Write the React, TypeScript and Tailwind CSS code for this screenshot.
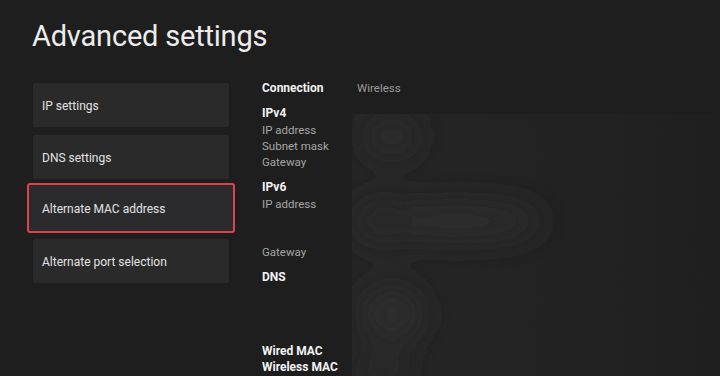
import React from "react";

const menu = [
  "IP settings",
  "DNS settings",
  "Alternate MAC address",
  "Alternate port selection",
];

type Row = { text: string; bold?: boolean; gapBefore?: string };

const rows: Row[] = [
  { text: "IPv4", bold: true },
  { text: "IP address" },
  { text: "Subnet mask" },
  { text: "Gateway" },
  { text: "IPv6", bold: true, gapBefore: "mt-[9px]" },
  { text: "IP address" },
  { text: "Gateway", gapBefore: "mt-[32px]" },
  { text: "DNS", bold: true, gapBefore: "mt-[9px]" },
  { text: "Wired MAC", bold: true, gapBefore: "mt-[57px]" },
  { text: "Wireless MAC", bold: true },
];

function BlurredValues() {
  // redacted values: just a soft smudge
  return (
    <svg className="h-full w-full" viewBox="0 0 368 262" preserveAspectRatio="none">
      <defs>
        <filter id="soft" x="-50%" y="-50%" width="200%" height="200%">
          <feGaussianBlur stdDeviation="16" />
        </filter>
        <filter id="grain">
          <feTurbulence type="fractalNoise" baseFrequency="1.2" numOctaves="1" seed="3" />
          <feColorMatrix
            type="matrix"
            values="0 0 0 0 1  0 0 0 0 1  0 0 0 0 1  1 0 0 0 -0.5"
          />
        </filter>
        <linearGradient id="fade" x1="0" x2="1" y1="0" y2="0">
          <stop offset="0" stopColor="#252525" />
          <stop offset="0.6" stopColor="#222222" />
          <stop offset="1" stopColor="#1f1f1f" />
        </linearGradient>
      </defs>
      <rect x="0" y="0" width="368" height="262" fill="url(#fade)" />
      <g filter="url(#soft)">
        <ellipse cx="40" cy="22" rx="26" ry="16" fill="#2f2f2f" />
        <ellipse cx="105" cy="104" rx="85" ry="16" fill="#2e2e2e" />
        <ellipse cx="30" cy="104" rx="30" ry="20" fill="#2c2c2c" />
        <ellipse cx="40" cy="194" rx="30" ry="26" fill="#2d2d2d" />
        <ellipse cx="30" cy="250" rx="24" ry="16" fill="#2a2a2a" />
      </g>
      <rect x="0" y="0" width="368" height="262" filter="url(#grain)" opacity="0.035" />
    </svg>
  );
}

export default function App() {
  return (
    <main
      className="h-[376px] w-[720px] overflow-hidden bg-[#1e1e1e] text-[#e6e6e6]"
      style={{ fontFamily: "Roboto, 'Noto Sans', sans-serif" }}
    >
      <h1 className="pl-[32px] pt-[16px] text-[29px] leading-[40px] tracking-[-0.2px] text-[#ececec]">
        Advanced settings
      </h1>

      <div className="mt-[27px] flex">
        <div className="ml-[27px] flex w-[208px] flex-col">
          <div className="mx-[6px] flex h-[44px] items-center rounded-[2px] bg-[#2a2a2a] pl-[9px] pt-[2px] text-[12px] text-[#e2e2e2]">
            {menu[0]}
          </div>
          <div className="mx-[6px] mt-[8px] flex h-[44px] items-center rounded-[2px] bg-[#2a2a2a] pl-[9px] pt-[2px] text-[12px] text-[#e2e2e2]">
            {menu[1]}
          </div>
          <div className="mt-[4px] flex h-[50px] items-center rounded-[3px] border-2 border-[#e0414f] bg-[#2b2b2e] pl-[13px] pt-[2px] text-[12px] text-[#e2e2e2]">
            {menu[2]}
          </div>
          <div className="mx-[6px] mt-[6px] flex h-[44px] items-center rounded-[2px] bg-[#2a2a2a] pl-[9px] pt-[2px] text-[12px] text-[#e2e2e2]">
            {menu[3]}
          </div>
        </div>

        <div className="ml-[27px] flex flex-1 text-[11.5px] leading-[16.3px]">
          <div className="w-[89px]">
            <div className="-mt-[3px] text-[12px] font-bold text-[#f2f2f2]">Connection</div>
            <div className="mt-[9px] flex flex-col">
              {rows.map((r, i) => (
                <div
                  key={i}
                  className={
                    (r.gapBefore ?? "") +
                    (r.bold ? " text-[12px] font-bold text-[#f2f2f2]" : " text-[#a6a6a6]")
                  }
                >
                  {r.text}
                </div>
              ))}
            </div>
          </div>
          <div className="flex flex-1 flex-col">
            <div className="-mt-[3px] pl-[6px] text-[#9c9c9c]">Wireless</div>
            <div className="mt-[18px] h-[270px] pl-[1px]">
              <BlurredValues />
            </div>
          </div>
        </div>
      </div>
    </main>
  );
}
